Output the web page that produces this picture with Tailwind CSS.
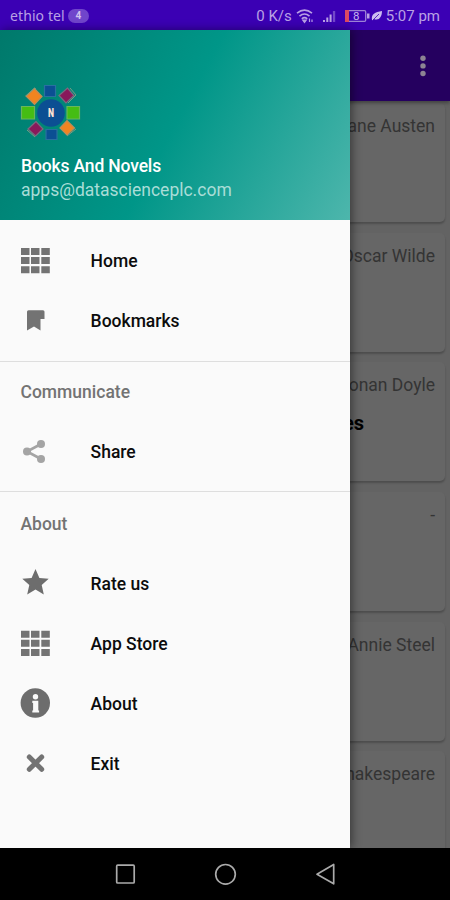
<!DOCTYPE html>
<html lang="en">
<head>
<meta charset="utf-8">
<title>Books And Novels</title>
<script src="https://cdn.jsdelivr.net/npm/@tailwindcss/browser@4"></script>
</head>
<body class="w-[450px] h-[900px] overflow-hidden bg-black font-[Roboto,sans-serif]">
<div class="relative flex h-[900px] w-[450px] flex-col overflow-hidden">
  <!-- status bar -->
  <header class="flex h-[30px] shrink-0 items-center bg-[#3b00b4] pt-[2px] pl-[10px] pr-[10px] text-[#b9a0e4]">
    <span class="font-['Noto_Sans',sans-serif] text-[14px] leading-none tracking-[0.1px]">ethio tel</span>
    <span class="ml-[3px] flex h-[14px] w-[21px] items-center justify-center rounded-full bg-[#7045cb] text-[10px] font-bold leading-none text-[#d2c2f0]">4</span>
    <span class="ml-auto text-[15px] leading-none">0 K/s</span>
    <svg class="ml-[4px]" width="18" height="16" viewBox="0 0 18 16" fill="none" stroke="#b9a0e4" stroke-width="1.6"><path d="M1 5.2Q8.500-1 16 5.200M3.500 8.200Q8.500 3.800 13.500 8.200M5.800 10.900Q8.500 8.500 11.200 10.900"/><path d="M6.800 12.200h3.400L8.500 14.400zM13.500 10.500v3.500M16 11.500v2.500" stroke-width="1.200" fill="#b9a0e4"/></svg>
    <svg class="ml-[9px]" width="14" height="14" viewBox="0 0 14 14" fill="#b9a0e4"><path d="M0 11h2v2H0zM3.300 8.500h2V13h-2zM6.600 5.500h2V13h-2z"/><path d="M9.900 2h2.300v11H9.900z" opacity=".45"/></svg>
    <svg class="ml-[7px]" width="26" height="14" viewBox="0 0 26 14"><rect x="1.700" y="1.700" width="20" height="10.600" rx="1.200" fill="none" stroke="#9c82d6" stroke-width="1.300"/><path d="M1 1h4v12H1z" fill="#dc4a62"/><path d="M23 4.500h2.500v5H23z" fill="#b9a0e4"/><text x="12.300" y="11" text-anchor="middle" font-family="Roboto" font-size="11.500" fill="#c7b4ed">8</text></svg>
    <svg class="ml-[1px]" width="12" height="12" viewBox="0 0 12 12"><path d="M1 10C0 4 4 2 11 1C11 7 8 11 3 9L1 11z" fill="#cbbaf0"/><path d="M1 11L8 4" stroke="#3b00b4" stroke-width=".8"/></svg>
    <span class="ml-[3px] text-[15px] leading-none">5:07 pm</span>
  </header>

  <!-- book list under the scrim -->
  <main class="flex min-h-0 flex-1 flex-col overflow-hidden bg-[#636363]">
    <div class="z-10 flex h-[70.500px] shrink-0 items-center justify-end bg-[#25005f] pt-[1px] pr-[24px] shadow-[0_2px_4px_rgba(0,0,0,0.350)]">
      <svg width="6" height="22" viewBox="0 0 6 22" fill="#8d8493"><circle cx="3" cy="3.300" r="2.700"/><circle cx="3" cy="10.900" r="2.700"/><circle cx="3" cy="18.500" r="2.700"/></svg>
    </div>
    <div class="flex flex-col gap-[10.700px] pt-[2.500px] pl-[5px] pr-[5px] text-right text-[17.500px] leading-[22px] text-[#343434]">
      <article class="h-[119px] shrink-0 rounded-[5px] bg-[#666] pt-[12px] pr-[10px] shadow-[0_2px_2px_rgba(0,0,0,0.220)]"><p>Jane Austen</p></article>
      <article class="h-[119px] shrink-0 rounded-[5px] bg-[#666] pt-[12px] pr-[10px] shadow-[0_2px_2px_rgba(0,0,0,0.220)]"><p>Oscar Wilde</p></article>
      <article class="h-[119px] shrink-0 rounded-[5px] bg-[#666] pt-[12px] pr-[10px] shadow-[0_2px_2px_rgba(0,0,0,0.220)]"><p>Arthur Conan Doyle</p><p class="mt-[15px] pr-[71px] text-[20px] font-bold leading-[24px] text-black">The Adventures of Sherlock Holmes</p></article>
      <article class="h-[119px] shrink-0 rounded-[5px] bg-[#666] pt-[12px] pr-[10px] shadow-[0_2px_2px_rgba(0,0,0,0.220)]"><p>-</p></article>
      <article class="h-[119px] shrink-0 rounded-[5px] bg-[#666] pt-[12px] pr-[10px] shadow-[0_2px_2px_rgba(0,0,0,0.220)]"><p>Annie Steel</p></article>
      <article class="h-[119px] shrink-0 rounded-[5px] bg-[#666] pt-[12px] pr-[10px] shadow-[0_2px_2px_rgba(0,0,0,0.220)]"><p>William Shakespeare</p></article>
    </div>
  </main>

  <!-- navigation drawer -->
  <aside class="absolute top-[30px] left-0 z-20 flex h-[818px] w-[350.400px] flex-col bg-[#fafafa] shadow-[2px_0_9px_rgba(0,0,0,0.450)]">
    <div class="flex h-[190px] shrink-0 flex-col bg-[linear-gradient(118deg,#00796b_0%,#009688_50%,#4db6ac_100%)] pt-[53px] pl-[20px] leading-[24px]">
      <svg width="62" height="60" viewBox="0 0 62 60">
        <g stroke-width="1.200">
          <g fill="#0b4f93" stroke="#2870a0"><path d="M24.500 2.500h11v11h-11zM26 46.500h11v10H26z"/></g>
          <g fill="#45bd13" stroke="#69b65b"><path d="M1.500 23.500h13v12.500h-13zM47 23.500h12.500v12.500H47z"/></g>
          <g fill="#f28420" stroke="#be8c58"><path d="M6 13L14.500 5.500L22 13.500L14.500 21.500zM40 45L47 37.500L54.500 45L47 52z"/></g>
          <g fill="#88195b" stroke="#776c80"><path d="M39 12.500L47.500 5L54 12.500L46 20zM8 46L16 38.500L23 46L15.500 53z"/></g>
        </g>
        <g fill="none" stroke="#779b83"><path d="M6 13L14.500 5L16 6M50 5L56 12L48 20M7 47L15 54M47 53L56 46"/></g>
        <circle cx="31" cy="30" r="13.800" fill="#0b4f93"/>
        <text x="31" y="34.300" text-anchor="middle" font-family="Roboto" font-weight="900" font-size="12.500" textLength="6" lengthAdjust="spacingAndGlyphs" fill="#ffe2d2">N</text>
      </svg>
      <p class="mt-[11px] pl-[1px] text-[17.500px] font-medium tracking-[-0.150px] text-white">Books And Novels</p>
      <p class="pl-[1px] text-[17.500px] text-[#a9ddd7]">apps@datascienceplc.com</p>
    </div>
    <nav class="flex flex-col pt-[11px] text-[17.500px] font-medium text-[#0c0c0c]">
      <a class="flex h-[60px] items-center pl-[20px]"><svg class="mr-[40.600px]" width="30" height="30" viewBox="0 0 30 30" fill="#737373"><path d="M1 2h8.500v7H1zM11 2h8.500v7H11zM21.300 2h8.500v7h-8.500zM1 11h8.500v7H1zM11 11h8.500v7H11zM21.300 11h8.500v7h-8.500zM1 20.200h8.500v7H1zM11 20.200h8.500v7H11zM21.300 20.200h8.500v7h-8.500z"/></svg><span class="pt-px">Home</span></a>
      <a class="flex h-[60px] items-center pl-[20px]"><svg class="mr-[40.600px]" width="30" height="30" viewBox="0 0 30 30" fill="#737373"><path d="M8.500 4.300H23q1.500 0 1.500 1.500V13h-4v11.500L14 20.500L7 24.500V5.800q0-1.500 1.500-1.500z"/></svg><span class="pt-px">Bookmarks</span></a>
      <hr class="mt-[10px] border-0 border-t border-[#dedede]">
      <h2 class="flex h-[60px] items-center pt-px pl-[20.500px] text-[#737373]">Communicate</h2>
      <a class="flex h-[60px] items-center pl-[20px]"><svg class="mr-[40.600px]" width="30" height="30" viewBox="0 0 30 30" fill="#a4a4a4" stroke="#a4a4a4"><path d="M21 7L7 14.500L21 22" fill="none" stroke-width="2.600"/><g stroke="none"><circle cx="21" cy="7" r="4"/><circle cx="7" cy="14.500" r="4"/><circle cx="21" cy="22" r="4"/></g></svg><span class="pt-px">Share</span></a>
      <hr class="mt-[9px] mb-[1px] border-0 border-t border-[#dedede]">
      <h2 class="flex h-[60px] items-center pt-[2px] pl-[20.500px] text-[#737373]">About</h2>
      <a class="flex h-[60px] items-center pl-[20px]"><svg class="mr-[40.600px]" width="30" height="30" viewBox="0 0 30 30" fill="#6d6d6d"><path d="M15.500 1.000L19.400 9.900L28.700 10.800L21.700 17.100L23.800 26.500L15.500 21.600L7.200 26.500L9.300 17.100L2.300 10.800L11.600 9.900z"/></svg><span class="pt-[2px]">Rate us</span></a>
      <a class="flex h-[60px] items-center pl-[20px]"><svg class="mr-[40.600px]" width="30" height="30" viewBox="0 0 30 30" fill="#737373"><path d="M1 2.800h8.500v7H1zM11 2.800h8.500v7H11zM21.300 2.800h8.500v7h-8.500zM1 11.800h8.500v7H1zM11 11.800h8.500v7H11zM21.300 11.800h8.500v7h-8.500zM1 21h8.500v7H1zM11 21h8.500v7H11zM21.300 21h8.500v7h-8.500z"/></svg><span class="pt-[2px]">App Store</span></a>
      <a class="flex h-[60px] items-center pl-[20px]"><svg class="mr-[40.600px]" width="30" height="30" viewBox="0 0 30 30"><circle cx="15.300" cy="15" r="14.700" fill="#6d6d6d"/><g fill="#fafafa"><circle cx="15.500" cy="8.700" r="2.700"/><path d="M12.300 12.700h6v9.800h.8v2h-6.800v-2h.8v-7.600h-.8z"/></g></svg><span class="pt-[2px]">About</span></a>
      <a class="flex h-[60px] items-center pl-[20px]"><svg class="mr-[40.600px]" width="30" height="30" viewBox="0 0 30 30" fill="none" stroke="#737373" stroke-width="5" stroke-linecap="round"><path d="M9.300 9L21.700 21.300M21.700 9L9.300 21.300"/></svg><span class="pt-[2px]">Exit</span></a>
    </nav>
  </aside>

  <!-- system navigation -->
  <footer class="grid h-[52px] shrink-0 grid-cols-[100px_100px_100px] justify-center bg-black pb-[1px]">
    <svg class="m-auto" width="24" height="24" viewBox="0 0 24 24" fill="none" stroke="#aaa" stroke-width="1.700"><rect x="3.700" y="3.200" width="17.500" height="17.800" rx="1"/></svg>
    <svg class="m-auto" width="24" height="24" viewBox="0 0 24 24" fill="none" stroke="#aaa" stroke-width="1.700"><circle cx="12.500" cy="12.300" r="9.800"/></svg>
    <svg class="m-auto" width="24" height="24" viewBox="0 0 24 24" fill="none" stroke="#aaa" stroke-width="1.700" stroke-linejoin="round"><path d="M20.700 2.500v19.300L4 12.200z"/></svg>
  </footer>
</div>
</body>
</html>
